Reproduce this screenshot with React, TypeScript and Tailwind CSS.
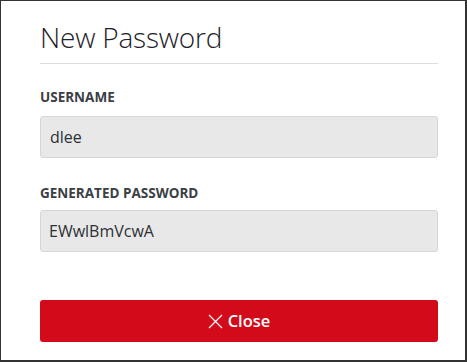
import React from "react";

export default function App() {
  return (
    <div
      className="w-[467px] h-[362px] bg-white border-t border-l border-r-2 border-b-2 border-[#333333] box-border"
      style={{ fontFamily: '"Open Sans", "Noto Sans", sans-serif' }}
    >
      <div className="pl-[39px] pr-[27px] pt-[18px]">
        <h1 className="text-[28px] leading-[36px] font-light text-[#1e2228] tracking-[-0.2px]">
          New Password
        </h1>
        <div className="mt-[8px] h-px bg-[#dcdcdc]" />
        <div className="mt-[23px] text-[13.5px] leading-[20px] font-bold text-[#3b3f45]">
          USERNAME
        </div>
        <div className="mt-[9px] h-[42px] rounded-[3px] bg-[#e8e8e8] border border-[#d6d6d6] flex items-center pl-[9px] text-[16px] text-[#2d3035]">
          dlee
        </div>
        <div className="mt-[25px] text-[13.5px] leading-[20px] font-bold text-[#3b3f45]">
          GENERATED PASSWORD
        </div>
        <div className="mt-[7px] h-[42px] rounded-[3px] bg-[#e8e8e8] border border-[#d6d6d6] flex items-center pl-[8px] text-[16px] text-[#2d3035]">
          EWwlBmVcwA
        </div>
        <button className="mt-[48px] w-full h-[42px] rounded-[3px] bg-[#d20a1a] flex items-center justify-center gap-[5px] text-white text-[16.5px] font-semibold">
          <svg width="15" height="15" viewBox="0 0 15 15" fill="none" stroke="white" strokeWidth="1.2">
            <path d="M1 1L14 14M14 1L1 14" />
          </svg>
          <span>Close</span>
        </button>
      </div>
    </div>
  );
}
